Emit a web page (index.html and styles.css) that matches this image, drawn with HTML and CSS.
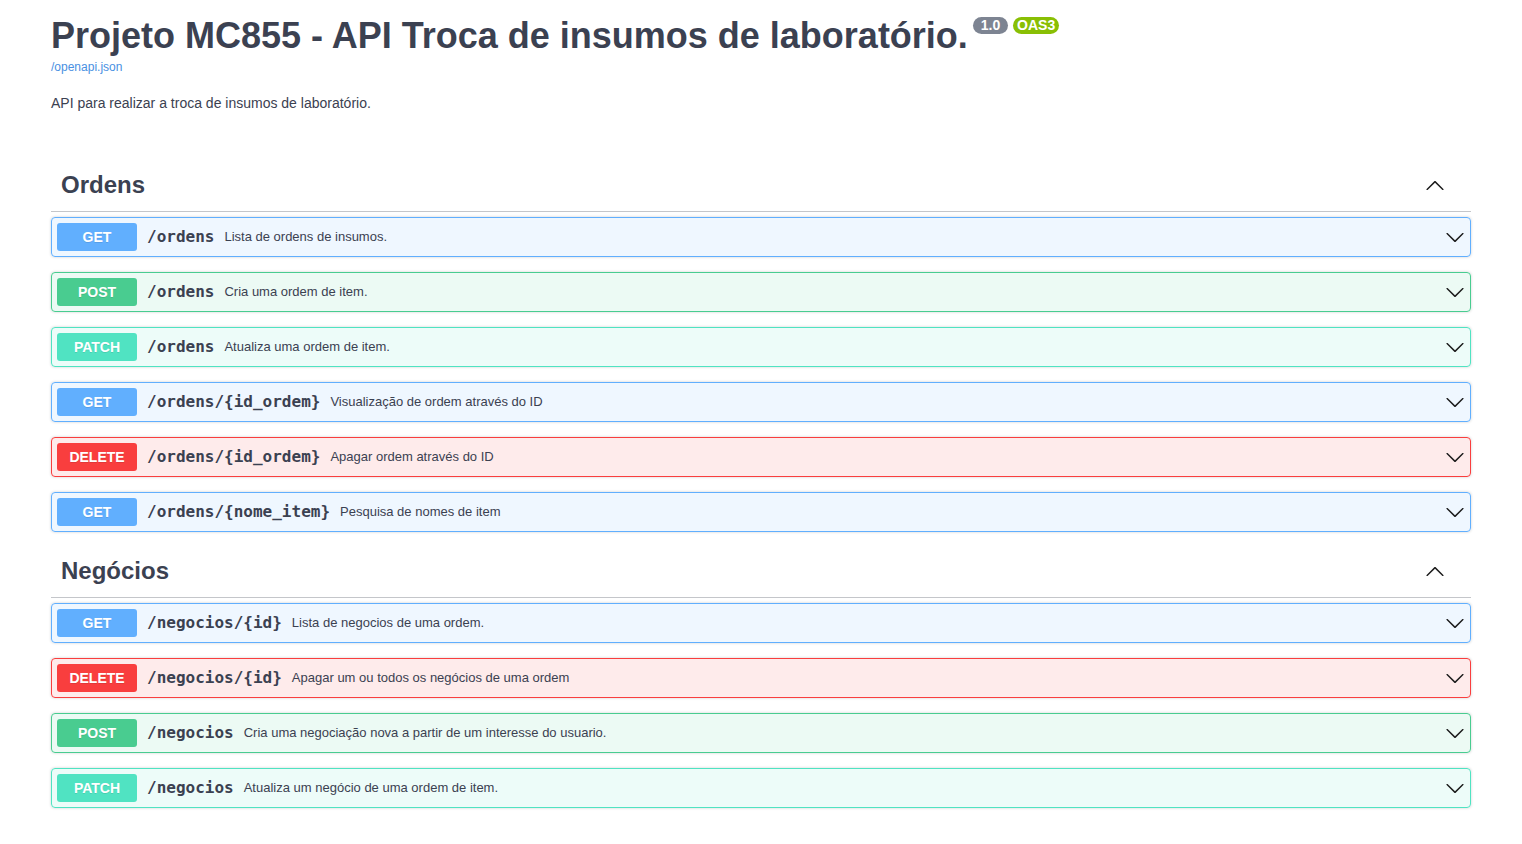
FILE: index.html
```html
<!DOCTYPE html>
<html lang="pt">
<head>
<meta charset="utf-8">
<title>Projeto MC855 - API Troca de insumos de laboratório.</title>
<link rel="stylesheet" href="styles.css">
</head>
<body>
<div class="wrapper">
  <section class="info">
    <div class="main">
      <h2 class="title">Projeto MC855 - API Troca de insumos de laboratório.<small class="badge badge-version"><pre> 1.0 </pre></small><small class="badge badge-oas"><pre>OAS3</pre></small></h2>
      <a class="link" href="#"><span>/openapi.json</span></a>
    </div>
    <p class="description">API para realizar a troca de insumos de laboratório.</p>
  </section>

  <section class="tag-section">
    <div class="tag">
      <h3 class="tag-name">Ordens</h3>
      <button class="expand" type="button"><svg width="20" height="20" viewBox="0 0 20 20"><path d="M17.418 14.908c.272.268.709.268.979 0s.271-.701 0-.969l-7.908-7.83c-.27-.268-.707-.268-.979 0l-7.908 7.830c-.27.268-.27.701 0 .969.271.268.709.268.979 0L10 7.767l7.418 7.141z"/></svg></button>
    </div>
    <div class="ops">
      <div class="opblock get"><div class="summary"><span class="method">GET</span><span class="path">/ordens</span><span class="desc">Lista de ordens de insumos.</span><svg class="arrow" width="20" height="20" viewBox="0 0 20 20"><path d="M17.418 6.109c.272-.268.709-.268.979 0s.271.701 0 .969l-7.908 7.83c-.27.268-.707.268-.979 0l-7.908-7.83c-.27-.268-.27-.701 0-.969.271-.268.709-.268.979 0L10 13.25l7.418-7.141z"/></svg></div></div>
      <div class="opblock post"><div class="summary"><span class="method">POST</span><span class="path">/ordens</span><span class="desc">Cria uma ordem de item.</span><svg class="arrow" width="20" height="20" viewBox="0 0 20 20"><path d="M17.418 6.109c.272-.268.709-.268.979 0s.271.701 0 .969l-7.908 7.83c-.27.268-.707.268-.979 0l-7.908-7.830c-.27-.268-.27-.701 0-.969.271-.268.709-.268.979 0L10 13.25l7.418-7.141z"/></svg></div></div>
      <div class="opblock patch"><div class="summary"><span class="method">PATCH</span><span class="path">/ordens</span><span class="desc">Atualiza uma ordem de item.</span><svg class="arrow" width="20" height="20" viewBox="0 0 20 20"><path d="M17.418 6.109c.272-.268.709-.268.979 0s.271.701 0 .969l-7.908 7.83c-.27.268-.707.268-.979 0l-7.908-7.83c-.27-.268-.27-.701 0-.969.271-.268.709-.268.979 0L10 13.25l7.418-7.141z"/></svg></div></div>
      <div class="opblock get"><div class="summary"><span class="method">GET</span><span class="path">/ordens/{id_ordem}</span><span class="desc">Visualização de ordem através do ID</span><svg class="arrow" width="20" height="20" viewBox="0 0 20 20"><path d="M17.418 6.109c.272-.268.709-.268.979 0s.271.701 0 .969l-7.908 7.83c-.27.268-.707.268-.979 0l-7.908-7.83c-.27-.268-.27-.701 0-.969.271-.268.709-.268.979 0L10 13.25l7.418-7.141z"/></svg></div></div>
      <div class="opblock delete"><div class="summary"><span class="method">DELETE</span><span class="path">/ordens/{id_ordem}</span><span class="desc">Apagar ordem através do ID</span><svg class="arrow" width="20" height="20" viewBox="0 0 20 20"><path d="M17.418 6.109c.272-.268.709-.268.979 0s.271.701 0 .969l-7.908 7.83c-.27.268-.707.268-.979 0l-7.908-7.83c-.27-.268-.27-.701 0-.969.271-.268.709-.268.979 0L10 13.25l7.418-7.141z"/></svg></div></div>
      <div class="opblock get"><div class="summary"><span class="method">GET</span><span class="path">/ordens/{nome_item}</span><span class="desc">Pesquisa de nomes de item</span><svg class="arrow" width="20" height="20" viewBox="0 0 20 20"><path d="M17.418 6.109c.272-.268.709-.268.979 0s.271.701 0 .969l-7.908 7.83c-.27.268-.707.268-.979 0l-7.908-7.83c-.27-.268-.27-.701 0-.969.271-.268.709-.268.979 0L10 13.25l7.418-7.141z"/></svg></div></div>
    </div>
  </section>

  <section class="tag-section">
    <div class="tag">
      <h3 class="tag-name">Negócios</h3>
      <button class="expand" type="button"><svg width="20" height="20" viewBox="0 0 20 20"><path d="M17.418 14.908c.272.268.709.268.979 0s.271-.701 0-.969l-7.908-7.83c-.27-.268-.707-.268-.979 0l-7.908 7.830c-.27.268-.27.701 0 .969.271.268.709.268.979 0L10 7.767l7.418 7.141z"/></svg></button>
    </div>
    <div class="ops">
      <div class="opblock get"><div class="summary"><span class="method">GET</span><span class="path">/negocios/{id}</span><span class="desc">Lista de negocios de uma ordem.</span><svg class="arrow" width="20" height="20" viewBox="0 0 20 20"><path d="M17.418 6.109c.272-.268.709-.268.979 0s.271.701 0 .969l-7.908 7.83c-.27.268-.707.268-.979 0l-7.908-7.83c-.27-.268-.27-.701 0-.969.271-.268.709-.268.979 0L10 13.25l7.418-7.141z"/></svg></div></div>
      <div class="opblock delete"><div class="summary"><span class="method">DELETE</span><span class="path">/negocios/{id}</span><span class="desc">Apagar um ou todos os negócios de uma ordem</span><svg class="arrow" width="20" height="20" viewBox="0 0 20 20"><path d="M17.418 6.109c.272-.268.709-.268.979 0s.271.701 0 .969l-7.908 7.83c-.27.268-.707.268-.979 0l-7.908-7.83c-.27-.268-.27-.701 0-.969.271-.268.709-.268.979 0L10 13.25l7.418-7.141z"/></svg></div></div>
      <div class="opblock post"><div class="summary"><span class="method">POST</span><span class="path">/negocios</span><span class="desc">Cria uma negociação nova a partir de um interesse do usuario.</span><svg class="arrow" width="20" height="20" viewBox="0 0 20 20"><path d="M17.418 6.109c.272-.268.709-.268.979 0s.271.701 0 .969l-7.908 7.83c-.27.268-.707.268-.979 0l-7.908-7.83c-.27-.268-.27-.701 0-.969.271-.268.709-.268.979 0L10 13.25l7.418-7.141z"/></svg></div></div>
      <div class="opblock patch"><div class="summary"><span class="method">PATCH</span><span class="path">/negocios</span><span class="desc">Atualiza um negócio de uma ordem de item.</span><svg class="arrow" width="20" height="20" viewBox="0 0 20 20"><path d="M17.418 6.109c.272-.268.709-.268.979 0s.271.701 0 .969l-7.908 7.83c-.27.268-.707.268-.979 0l-7.908-7.83c-.27-.268-.27-.701 0-.969.271-.268.709-.268.979 0L10 13.25l7.418-7.141z"/></svg></div></div>
    </div>
  </section>
</div>
</body>
</html>
```

FILE: styles.css
```css
html, body {
  margin: 0;
  padding: 0;
  background: #fff;
}

body {
  font-family: "Liberation Sans", Arial, sans-serif;
  color: #3b4151;
}

.wrapper {
  box-sizing: border-box;
  max-width: 1460px;
  margin: 0 auto;
  padding: 0 20px;
}

.info {
  padding-top: 15px;
  margin-bottom: 51px;
}

.main {
  margin-bottom: 21px;
}

.title {
  margin: 0;
  font-size: 36px;
  font-weight: 700;
  color: #3b4151;
}

.badge {
  display: inline-block;
  margin-left: 5px;
  padding: 2px 4px;
  border-radius: 57px;
  font-size: 14px;
  line-height: 13px;
  vertical-align: super;
  position: relative;
  top: -5px;
}

.badge pre {
  margin: 0;
  padding: 0;
  font-family: "Liberation Sans", Arial, sans-serif;
  font-size: 14px;
  font-weight: 700;
  color: #fff;
}

.badge-version {
  background: #7d8492;
}

.badge-oas {
  background: #89bf04;
}

.link {
  display: block;
  margin-top: 3px;
  font-size: 12px;
  color: #4990e2;
  text-decoration: none;
}

.description {
  margin: 0;
  font-size: 14px;
  color: #3b4151;
}

.tag-section {
  display: flex;
  flex-direction: column;
}

.tag-section + .tag-section {
  margin-top: 1px;
}

.tag {
  display: flex;
  align-items: center;
  padding: 8px 20px 12px 10px;
  margin: 0 0 5px;
  border-bottom: 1px solid rgba(59, 65, 81, 0.3);
}

.tag-name {
  flex: 1;
  margin: 0;
  font-size: 24px;
  line-height: 29px;
  font-weight: 700;
  color: #3b4151;
}

.expand {
  display: flex;
  padding: 1px 6px;
  margin: 0;
  border: none;
  background: none;
}

.expand svg {
  fill: #1b1b1b;
}

.opblock {
  margin: 0 0 15px;
  border: 1px solid #000;
  border-radius: 4px;
  box-shadow: 0 0 3px rgba(0, 0, 0, 0.19);
}

.summary {
  display: flex;
  align-items: center;
  padding: 5px;
}

.method {
  min-width: 80px;
  padding: 6px 0;
  border-radius: 3px;
  font-size: 14px;
  line-height: 16px;
  font-weight: 700;
  text-align: center;
  color: #fff;
  text-shadow: 0 1px 0 rgba(0, 0, 0, 0.1);
}

.path {
  padding: 0 10px 2px;
  font-family: "DejaVu Sans Mono", "Liberation Mono", monospace;
  font-size: 16px;
  font-weight: 600;
  color: #3b4151;
}

.desc {
  flex: 1;
  padding-bottom: 2px;
  font-size: 13px;
  color: #3b4151;
}

.arrow {
  flex: none;
  fill: #1b1b1b;
}

.get {
  background: rgba(97, 175, 254, 0.1);
  border-color: #61affe;
}

.get .method {
  background: #61affe;
}

.post {
  background: rgba(73, 204, 144, 0.1);
  border-color: #49cc90;
}

.post .method {
  background: #49cc90;
}

.patch {
  background: rgba(80, 227, 194, 0.1);
  border-color: #50e3c2;
}

.patch .method {
  background: #50e3c2;
}

.delete {
  background: rgba(249, 62, 62, 0.1);
  border-color: #f93e3e;
}

.delete .method {
  background: #f93e3e;
}
```
